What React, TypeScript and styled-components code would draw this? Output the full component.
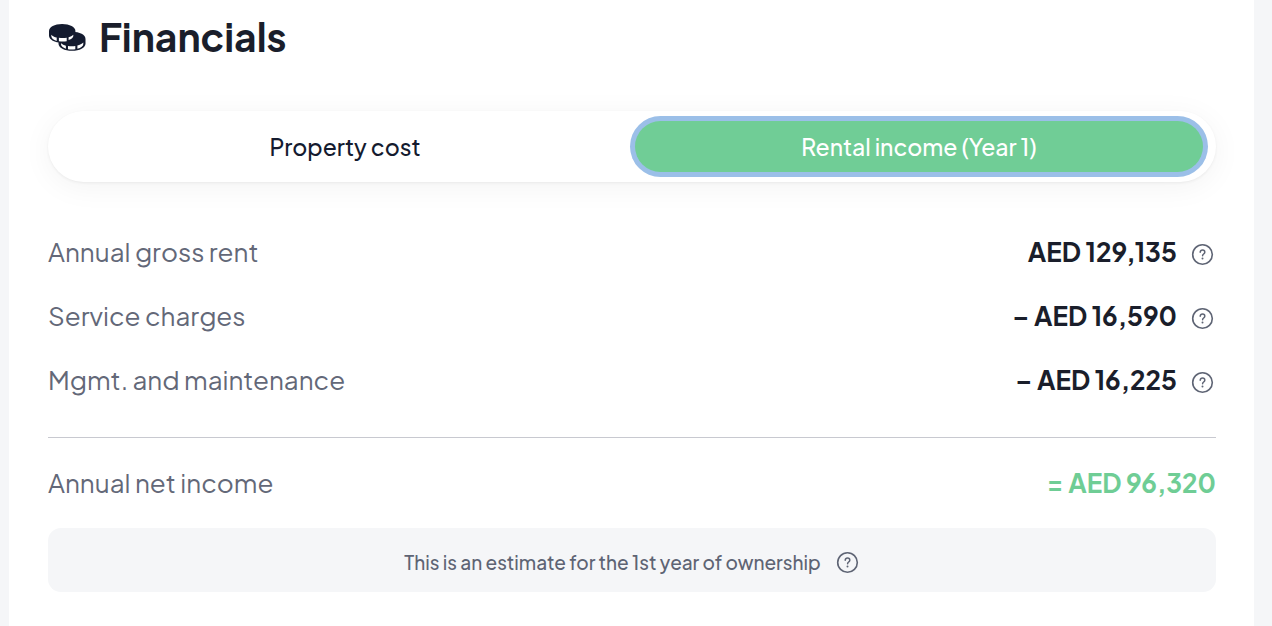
import React, { useState } from "react";
import styled, { createGlobalStyle } from "styled-components";

const GlobalStyle = createGlobalStyle`
  *, *::before, *::after { box-sizing: border-box; }
  body {
    margin: 0;
    background: #f5f6f8;
    color: #1a1e2b;
    font-family: "Plus Jakarta Sans", Inter, "Liberation Sans", sans-serif;
  }
`;

const Card = styled.main`
  min-height: 100vh;
  margin: 0 18px 0 9px;
  padding: 9px 38px 34px 39px;
  background: #fff;
`;

const Header = styled.header`
  display: flex;
  align-items: center;
  gap: 12px;
  height: 56px;
`;

const Title = styled.h1`
  margin: 0;
  font-size: 39px;
  line-height: 56px;
  font-weight: 700;
`;

const Tabs = styled.div`
  display: grid;
  grid-template-columns: 1fr 1fr;
  gap: 6px;
  margin: 46px 0 39px;
  padding: 10px 13px;
  border-radius: 36px;
  background: #fff;
  box-shadow: 0 1px 3px rgba(0, 0, 0, 0.06), 0 5px 30px rgba(0, 0, 0, 0.05);
`;

const Tab = styled.button<{ $active: boolean }>`
  height: 51px;
  padding: 0 16px;
  border: 0;
  border-radius: 26px;
  outline: 0;
  background: ${(p) => (p.$active ? "#70cd96" : "transparent")};
  box-shadow: ${(p) => (p.$active ? "0 0 0 5px #9bbfe8" : "none")};
  color: ${(p) => (p.$active ? "#fff" : "#141b2f")};
  font-family: inherit;
  font-size: 23px;
  font-weight: 500;
  cursor: pointer;
`;

const List = styled.dl`
  margin: 0;
`;

const Row = styled.div`
  display: flex;
  align-items: center;
  justify-content: space-between;
  height: 64px;
  padding-bottom: 2px;
`;

const Label = styled.dt`
  color: #636878;
  font-size: 26px;
  line-height: 32px;
  font-weight: 400;
`;

const Amount = styled.dd<{ $total?: boolean }>`
  display: flex;
  align-items: center;
  gap: 14px;
  margin: 0;
  color: ${(p) => (p.$total ? "#6fcd95" : "#1a1e2b")};
  font-size: 26px;
  line-height: 32px;
  font-weight: 700;
`;

const Divider = styled.hr`
  height: 1px;
  margin: 24px 0 14px;
  border: 0;
  background: #c8c9d0;
`;

const Note = styled.p`
  display: flex;
  align-items: center;
  justify-content: center;
  gap: 14px;
  min-height: 64px;
  margin: 12px 0 0;
  padding: 4px 16px 0;
  border-radius: 13px;
  background: #f5f6f8;
  color: #5e6474;
  font-size: 19px;
  line-height: 28px;
  font-weight: 500;
`;

const HelpButton = styled.button`
  display: flex;
  padding: 4px 2px 0 0;
  border: 0;
  background: none;
  color: #5e6474;
  cursor: pointer;
`;

const NoteHelp = styled(HelpButton)`
  padding: 0 1px;
`;

const HelpIcon = () => (
  <svg width="23" height="23" viewBox="0 0 23 23" fill="none" stroke="currentColor" aria-hidden="true">
    <circle cx="11.5" cy="11.5" r="9.8" strokeWidth="1.6" />
    <path d="M9.2 9.3c0-1.400 1-2.200 2.300-2.200s2.300.8 2.300 2.100c0 1.800-2.200 1.800-2.200 3.500" strokeWidth="1.500" strokeLinecap="round" />
    <circle cx="11.5" cy="15.6" r="1" fill="currentColor" stroke="none" />
  </svg>
);

const CoinsIcon = () => (
  <svg width="39" height="30" viewBox="0 0 39 30" aria-hidden="true">
    <g fill="#141b2f">
      <path d="M10.500 17c0-4.600 5.800-7.200 13.500-7.200S37.500 12.900 37.500 17v4.400c0 4.300-5.900 7.400-13.500 7.400s-13.500-3.100-13.500-7.400z" />
      <path d="M1 9C1 4.900 6.500 1.900 14.100 1.900S27.400 4.900 27.400 9v4.400c0 4.200-5.700 7.200-13.300 7.200S1 17.600 1 13.400z" />
    </g>
    <g fill="#fff">
      <path d="M3.300 12.700c1.300 1.300 3.200 2.300 5.400 2.900v3.400c-3.300-1-5.400-2.700-5.400-4.900z" />
      <path d="M10.900 15.700c2.500.5 5.300.5 7.800 0v3.500c-2.400.5-5.300.5-7.800 0z" />
      <path d="M20.600 15.300c2-.6 3.500-1.400 4.700-2.500v1.100c0 1.500-1.700 3-4.700 4.100z" />
      <path d="M13 21.200c1.300 1.100 2.900 1.900 4.900 2.500v3.100c-3-.9-4.900-2.700-4.900-4.700z" />
      <path d="M20 24c2.400.4 5 .4 7.300 0v3.200c-2.300.4-4.900.4-7.300 0z" />
      <path d="M29.400 23.500c2.400-.6 4.400-1.600 5.900-2.900v1.300c0 2-2.200 3.900-5.900 4.900z" />
    </g>
  </svg>
);

const tabs = ["Property cost", "Rental income (Year 1)"];

const items = [
  { label: "Annual gross rent", amount: "AED 129,135" },
  { label: "Service charges", amount: "– AED 16,590" },
  { label: "Mgmt. and maintenance", amount: "– AED 16,225" },
];

export default function App() {
  const [active, setActive] = useState(1);

  return (
    <>
      <GlobalStyle />
      <Card>
        <Header>
          <CoinsIcon />
          <Title>Financials</Title>
        </Header>
        <Tabs role="tablist">
          {tabs.map((tab, i) => (
            <Tab key={tab} role="tab" aria-selected={active === i} $active={active === i} onClick={() => setActive(i)}>
              {tab}
            </Tab>
          ))}
        </Tabs>
        <List>
          {items.map((item) => (
            <Row key={item.label}>
              <Label>{item.label}</Label>
              <Amount>
                {item.amount}
                <HelpButton aria-label={`About ${item.label}`}>
                  <HelpIcon />
                </HelpButton>
              </Amount>
            </Row>
          ))}
        </List>
        <Divider />
        <List>
          <Row>
            <Label>Annual net income</Label>
            <Amount $total>= AED 96,320</Amount>
          </Row>
        </List>
        <Note>
          This is an estimate for the 1st year of ownership
          <NoteHelp aria-label="About this estimate">
            <HelpIcon />
          </NoteHelp>
        </Note>
      </Card>
    </>
  );
}
